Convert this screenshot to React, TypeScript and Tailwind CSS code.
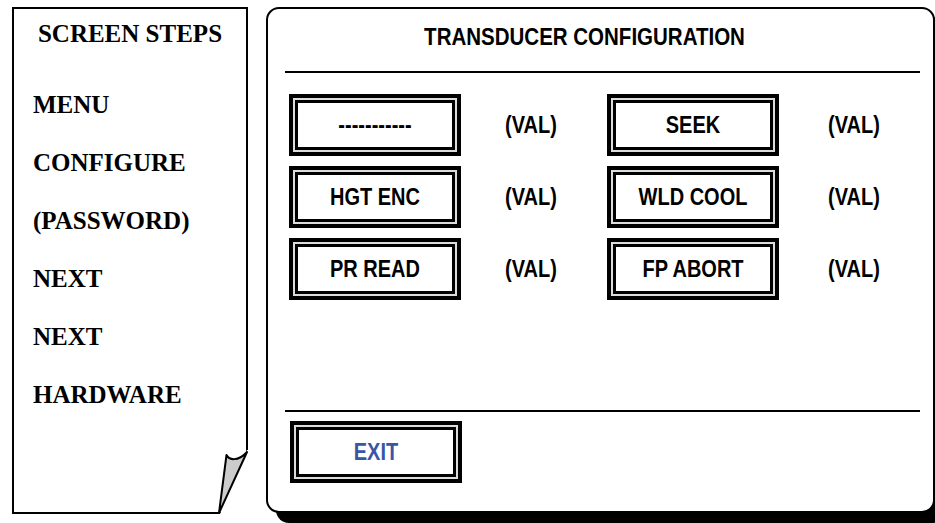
import React from "react";

const steps = ["MENU", "CONFIGURE", "(PASSWORD)", "NEXT", "NEXT", "HARDWARE"];

const rows = [
  ["-----------", "SEEK"],
  ["HGT ENC", "WLD COOL"],
  ["PR READ", "FP ABORT"],
];

const Label = ({ text, className = "" }: { text: string; className?: string }) => (
  <span className={`inline-block scale-y-[1.16] font-bold leading-[24px] ${className}`}>{text}</span>
);

const Button = ({ text, blue }: { text: string; blue?: boolean }) => (
  <div className="w-[172px] h-[62px] border-4 border-black bg-[#dcdcdc] p-[2px]">
    <div className="w-full h-full border-[3px] border-black bg-white flex items-center justify-center">
      <Label text={text} className={blue ? "text-[20px] text-[#3a55a6]" : "text-[20px] text-black"} />
    </div>
  </div>
);

const App = () => {
  return (
    <div className="w-[935px] h-[523px] bg-white overflow-hidden flex pl-[12px] pt-[7px] gap-[18px]">
      {/* screen steps note */}
      <div className="relative w-[236px] h-[507px] border-2 border-black font-['Liberation_Serif',serif] font-bold text-black shrink-0">
        <div className="text-center text-[25px] leading-[30px] mt-[10px]">SCREEN STEPS</div>
        <ul className="mt-[27px] pl-[19px] text-[25px] leading-[58px]">
          {steps.map((s, i) => (
            <li key={i}>{s}</li>
          ))}
        </ul>
        <svg
          className="absolute -right-[2px] -bottom-[2px] overflow-visible"
          width="40"
          height="70"
          viewBox="0 0 40 70"
        >
          <polygon points="12,70 39,6 43,6 43,73 12,73" fill="#fff" />
          <path
            d="M11 69 L18.5 11 C21 16 30 18 39 8 L11 69 Z"
            fill="#cccccc"
            stroke="#000"
            strokeWidth="2"
            strokeLinejoin="round"
          />
        </svg>
      </div>

      {/* configuration panel */}
      <div className="w-[669px] h-[506px] border-2 border-black rounded-[13px] shadow-[10px_10px_0_0_#000] bg-white shrink-0 font-['Liberation_Sans',Arial,sans-serif] text-black">
        <div className="mt-[15px] pr-[32px] text-center leading-[30px]">
          <Label text="TRANSDUCER CONFIGURATION" className="text-[20.5px]" />
        </div>
        <div className="mt-[17px] ml-[17px] mr-[13px] h-[2px] bg-black" />
        <div className="mt-[21px] ml-[21px] grid grid-cols-[172px_146px_172px_auto] gap-y-[10px]">
          {rows.map(([a, b], i) => (
            <React.Fragment key={i}>
              <Button text={a} />
              <div className="flex items-center pl-[44px]">
                <Label text="(VAL)" className="text-[20px]" />
              </div>
              <Button text={b} />
              <div className="flex items-center pl-[49px]">
                <Label text="(VAL)" className="text-[20px]" />
              </div>
            </React.Fragment>
          ))}
        </div>
        <div className="mt-[110px] ml-[17px] mr-[13px] h-[2px] bg-black" />
        <div className="mt-[9px] ml-[22px]">
          <Button text="EXIT" blue />
        </div>
      </div>
    </div>
  );
};

export default App;
